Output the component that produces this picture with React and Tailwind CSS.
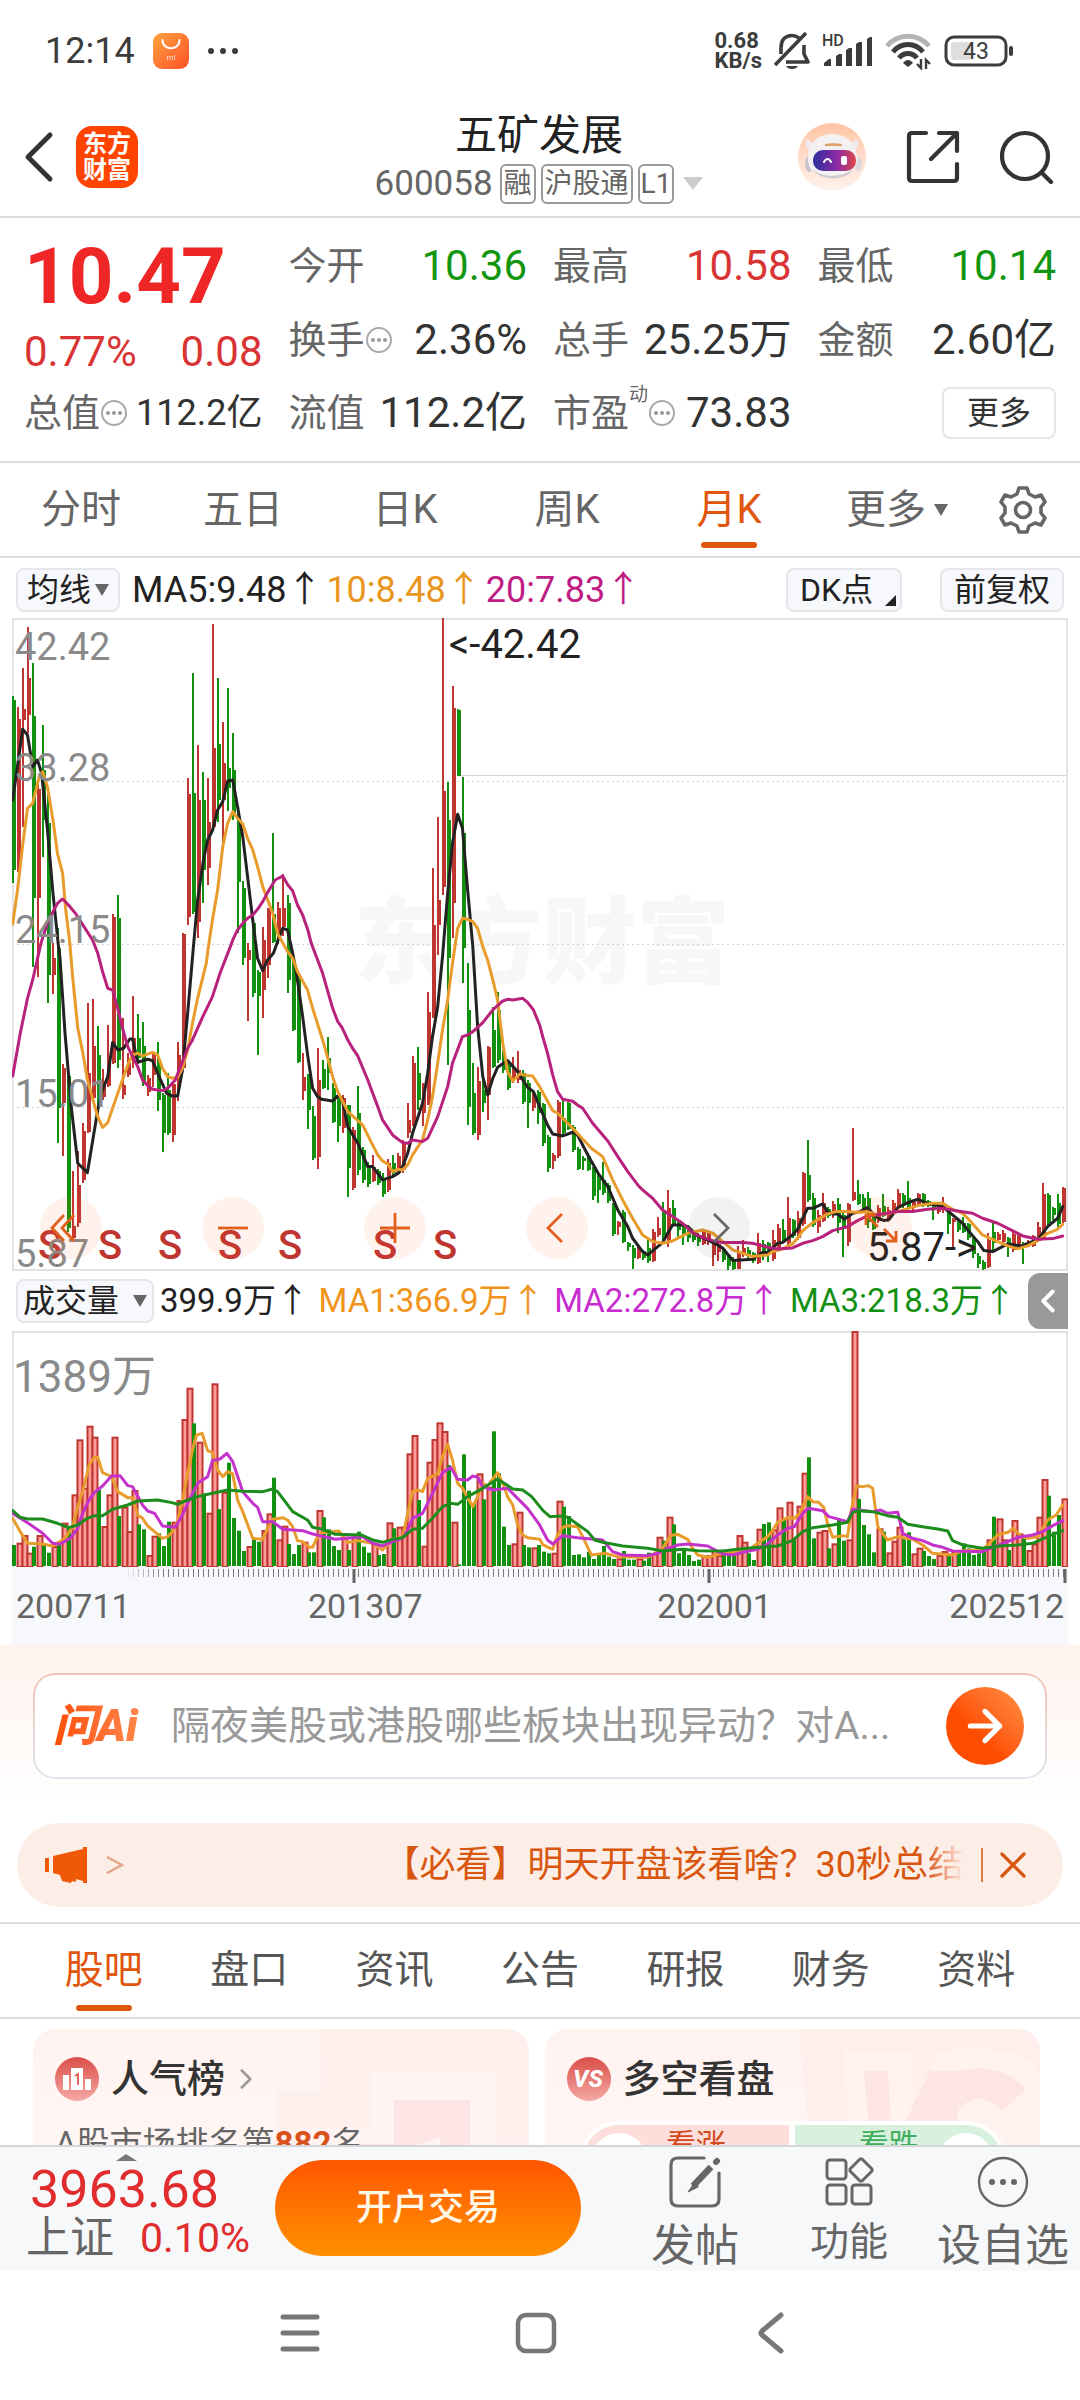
import React, { useState } from "react";
import { ChevronLeft, ChevronRight, X, ArrowRight } from "lucide-react";

const BAR_STEP = 5;

// [direction, high, low, body top, body bottom], one row per month
const CANDLES = [
  ["g", 78, 265, 82, 252], ["r", 89, 254, 101, 254], ["r", 50, 209, 91, 102], ["r", 9, 115, 60, 97], ["g", 45, 349, 98, 280],
  ["r", 165, 359, 171, 280], ["g", 107, 239, 152, 202], ["g", 177, 385, 205, 357], ["r", 325, 376, 340, 357], ["g", 310, 525, 330, 490],
  ["r", 446, 538, 450, 485], ["g", 450, 614, 458, 610], ["r", 553, 622, 608, 620], ["r", 533, 609, 567, 605], ["r", 505, 565, 513, 562],
  ["r", 385, 515, 455, 514], ["r", 381, 482, 428, 480], ["g", 408, 495, 437, 485], ["r", 451, 482, 468, 479], ["r", 407, 469, 442, 468],
  ["r", 296, 446, 299, 445], ["g", 277, 450, 300, 442], ["r", 400, 481, 467, 477], ["r", 435, 459, 445, 457], ["r", 378, 450, 420, 440],
  ["g", 396, 446, 420, 440], ["g", 404, 468, 428, 465], ["r", 457, 478, 460, 474], ["r", 434, 469, 437, 457], ["g", 424, 493, 445, 482],
  ["g", 475, 534, 477, 515], ["g", 455, 517, 472, 515], ["r", 465, 524, 466, 517], ["r", 424, 483, 437, 469], ["r", 315, 452, 316, 450],
  ["r", 160, 307, 176, 299], ["g", 55, 296, 175, 294], ["r", 127, 320, 182, 304], ["g", 154, 285, 182, 252], ["r", 160, 267, 204, 250],
  ["r", 6, 212, 130, 209], ["g", 60, 204, 126, 182], ["r", 104, 229, 145, 182], ["g", 70, 193, 150, 170], ["g", 115, 202, 152, 195],
  ["g", 195, 315, 205, 264], ["g", 263, 347, 270, 340], ["r", 325, 403, 332, 342], ["g", 300, 379, 305, 375], ["g", 352, 437, 354, 378],
  ["r", 309, 400, 322, 372], ["r", 290, 360, 291, 347], ["g", 215, 325, 296, 324], ["r", 284, 326, 290, 322], ["r", 256, 318, 290, 309],
  ["g", 277, 375, 285, 362], ["g", 344, 413, 346, 412], ["g", 355, 445, 360, 444], ["r", 435, 482, 459, 473], ["g", 456, 511, 457, 492],
  ["g", 488, 542, 498, 540], ["r", 430, 551, 462, 539], ["g", 442, 471, 451, 470], ["g", 419, 472, 440, 455], ["g", 465, 505, 470, 504],
  ["g", 477, 524, 480, 508], ["r", 477, 515, 480, 510], ["g", 487, 579, 487, 550], ["r", 509, 572, 512, 570], ["g", 468, 557, 495, 552],
  ["g", 529, 565, 532, 562], ["g", 544, 569, 547, 566], ["r", 537, 564, 549, 563], ["g", 551, 567, 553, 565], ["g", 555, 579, 560, 576],
  ["r", 541, 574, 545, 572], ["g", 537, 557, 545, 555], ["r", 535, 557, 538, 555], ["r", 522, 555, 524, 552], ["r", 485, 520, 502, 515],
  ["r", 438, 508, 445, 506], ["g", 429, 492, 455, 482], ["r", 465, 508, 475, 495], ["r", 374, 487, 394, 487], ["r", 250, 400, 307, 399],
  ["r", 199, 337, 282, 307], ["r", 0, 277, 173, 269], ["g", 164, 447, 202, 340], ["r", 68, 320, 90, 285], ["g", 91, 158, 92, 158],
  ["g", 159, 365, 215, 330], ["g", 345, 507, 392, 489], ["g", 445, 517, 475, 515], ["r", 449, 522, 463, 517], ["g", 462, 494, 472, 485],
  ["r", 428, 502, 429, 477], ["g", 389, 450, 412, 449], ["g", 374, 445, 392, 442], ["g", 432, 455, 437, 452], ["g", 442, 472, 447, 470],
  ["r", 439, 465, 450, 462], ["r", 433, 465, 452, 462], ["g", 452, 486, 455, 484], ["g", 462, 510, 465, 485], ["r", 475, 493, 480, 490],
  ["g", 472, 506, 474, 495], ["g", 485, 528, 486, 525], ["g", 517, 554, 519, 550], ["r", 535, 551, 537, 543], ["r", 482, 540, 484, 538],
  ["g", 482, 517, 500, 515], ["g", 484, 512, 485, 511], ["g", 507, 534, 509, 532], ["g", 529, 552, 531, 551], ["g", 538, 552, 540, 543],
  ["g", 535, 553, 538, 552], ["g", 549, 582, 551, 578], ["g", 557, 585, 560, 572], ["g", 544, 577, 562, 575], ["g", 565, 585, 567, 583],
  ["g", 585, 618, 587, 616], ["r", 603, 617, 604, 609], ["g", 592, 625, 594, 624], ["g", 624, 633, 625, 629], ["g", 627, 651, 630, 640],
  ["r", 629, 641, 631, 640], ["g", 632, 642, 633, 640], ["g", 620, 645, 630, 643], ["r", 611, 644, 614, 643], ["r", 599, 619, 610, 617],
  ["g", 584, 624, 592, 618], ["r", 572, 629, 590, 624], ["g", 582, 607, 590, 606], ["g", 602, 619, 604, 612], ["g", 605, 627, 608, 618],
  ["g", 607, 624, 609, 620], ["g", 612, 624, 614, 622], ["g", 615, 628, 617, 624], ["r", 611, 627, 613, 626], ["r", 612, 627, 614, 624],
  ["r", 622, 648, 624, 637], ["r", 624, 643, 626, 634], ["g", 629, 644, 631, 642], ["g", 635, 652, 637, 648], ["g", 639, 652, 641, 651],
  ["r", 628, 651, 634, 651], ["r", 622, 639, 630, 637], ["g", 629, 640, 632, 638], ["g", 634, 645, 635, 643], ["r", 615, 646, 625, 645],
  ["g", 622, 642, 626, 638], ["g", 624, 644, 625, 636], ["r", 612, 643, 622, 641], ["r", 606, 632, 610, 630], ["g", 601, 625, 612, 622],
  ["r", 579, 627, 600, 625], ["g", 601, 620, 602, 618], ["r", 593, 622, 600, 620], ["r", 554, 608, 555, 606], ["g", 522, 584, 557, 582],
  ["g", 575, 609, 580, 607], ["r", 592, 615, 597, 609], ["r", 575, 604, 585, 603], ["g", 589, 600, 591, 598], ["r", 583, 600, 586, 597],
  ["g", 580, 615, 586, 605], ["g", 595, 639, 597, 611], ["r", 585, 628, 586, 624], ["r", 510, 583, 574, 582], ["g", 562, 587, 576, 586],
  ["g", 576, 592, 580, 590], ["g", 574, 610, 580, 604], ["g", 595, 612, 598, 611], ["r", 587, 605, 590, 603], ["g", 576, 599, 588, 598],
  ["r", 589, 604, 592, 602], ["r", 582, 595, 585, 594], ["r", 571, 589, 575, 588], ["g", 575, 590, 577, 586], ["g", 563, 592, 580, 590],
  ["r", 582, 592, 584, 590], ["r", 575, 587, 576, 586], ["g", 575, 589, 576, 586], ["g", 582, 589, 583, 588], ["g", 584, 602, 586, 590],
  ["r", 587, 596, 589, 594], ["r", 579, 595, 585, 592], ["g", 590, 616, 592, 606], ["r", 600, 629, 601, 604], ["g", 602, 614, 603, 612],
  ["g", 599, 615, 605, 614], ["g", 605, 622, 606, 620], ["g", 620, 640, 622, 636], ["g", 635, 650, 638, 646], ["g", 642, 652, 644, 651],
  ["r", 615, 650, 622, 649], ["g", 604, 632, 614, 625], ["r", 614, 624, 616, 622], ["r", 612, 627, 615, 624], ["g", 619, 639, 620, 630],
  ["r", 612, 634, 616, 632], ["r", 615, 630, 618, 628], ["g", 624, 646, 625, 630], ["r", 622, 629, 623, 628], ["r", 617, 629, 618, 628],
  ["r", 604, 624, 609, 623], ["r", 565, 622, 576, 620], ["g", 575, 607, 577, 605], ["g", 589, 602, 590, 597], ["g", 576, 609, 585, 606],
  ["r", 569, 605, 570, 604],
];

// monthly volume, 705 is the height of the panel (1389万)
const VOLUMES = [
  63, 70, 93, 40, 58, 93, 63, 40, 60, 63, 130, 113, 215, 380, 235, 421, 388, 228, 120, 215,
  388, 150, 178, 105, 228, 125, 110, 33, 91, 98, 60, 133, 133, 198, 441, 535, 428, 373, 218, 160,
  548, 171, 223, 310, 144, 106, 45, 60, 80, 73, 108, 158, 265, 80, 121, 66, 36, 63, 73, 41,
  41, 168, 146, 110, 60, 48, 88, 48, 88, 103, 58, 40, 68, 33, 36, 131, 113, 118, 118, 338,
  393, 198, 61, 313, 381, 431, 405, 303, 133, 5, 335, 226, 188, 278, 200, 238, 404, 278, 118, 63,
  68, 163, 63, 56, 56, 63, 43, 38, 40, 196, 178, 150, 33, 35, 26, 43, 21, 33, 60, 28,
  21, 23, 45, 19, 19, 23, 16, 40, 38, 88, 76, 148, 125, 38, 50, 33, 15, 19, 30, 33,
  48, 33, 38, 38, 38, 93, 73, 38, 18, 112, 126, 131, 110, 176, 138, 193, 78, 181, 280, 326,
  83, 103, 108, 53, 68, 138, 76, 80, 705, 201, 123, 95, 41, 113, 103, 41, 76, 118, 80, 101,
  38, 55, 45, 30, 21, 33, 45, 35, 43, 48, 68, 53, 33, 38, 43, 80, 148, 143, 80, 48,
  138, 98, 83, 48, 68, 148, 261, 211, 103, 153, 203,
];

// moving averages, on a grid three times as fine as the candles
const PRICE_LINES = [
  {
    color: "#222222",
    points:
      "2,546 31,334 45,351 60,446 74,426 86,466 103,636 119,826 136,996 139,1016 154,1246 172,1466 191,1636 219,1664 249,1476 263,1416 278,1376 292,1274 307,1296 324,1291 342,1263 350,1263 365,1333 394,1324 408,1328 423,1366 449,1426 464,1434 481,1434 495,1356 510,1186 526,996 539,846 556,726 568,666 582,638 597,576 612,551 626,489 641,486 655,566 670,656 684,776 699,906 713,1021 728,1058 742,1026 759,1006 771,971 786,931 800,936 815,1006 826,1066 844,1196 859,1316 873,1411 887,1436 899,1444 931,1449 946,1434 958,1441 975,1526 1004,1576 1033,1646 1047,1646 1076,1686 1105,1676 1124,1664 1134,1646 1149,1606 1163,1546 1192,1456 1207,1366 1221,1256 1236,1166 1250,1016 1265,826 1279,676 1294,589 1308,631 1323,816 1338,986 1352,1226 1367,1376 1381,1431 1396,1381 1410,1348 1439,1328 1468,1361 1497,1408 1514,1421 1532,1466 1555,1521 1570,1548 1599,1554 1628,1543 1642,1551 1672,1611 1702,1666 1730,1706 1759,1776 1788,1826 1802,1861 1831,1901 1846,1911 1875,1886 1889,1874 1904,1846 1918,1821 1947,1821 1962,1826 1991,1854 2020,1866 2049,1881 2064,1891 2093,1928 2150,1924 2179,1904 2194,1904 2223,1876 2237,1874 2266,1851 2281,1834 2296,1801 2310,1771 2325,1771 2354,1758 2368,1781 2383,1788 2397,1788 2417,1804 2441,1786 2462,1781 2484,1769 2507,1796 2532,1808 2547,1804 2572,1769 2601,1754 2630,1744 2659,1756 2702,1766 2731,1791 2760,1816 2775,1836 2804,1871 2822,1898 2848,1901 2891,1878 2932,1884 2962,1871 2978,1866 3007,1826 3036,1801 3051,1766",
  },
  {
    color: "#e89c2c",
    points:
      "2,918 16,816 31,681 45,571 60,556 79,476 89,461 103,506 119,606 132,706 147,766 156,876 168,976 176,1076 191,1231 205,1301 219,1386 234,1441 249,1496 263,1528 278,1514 292,1471 314,1406 336,1341 350,1311 365,1306 379,1314 408,1303 423,1311 437,1351 452,1376 466,1381 481,1378 495,1351 510,1296 524,1216 539,1141 564,1036 569,996 582,906 597,816 612,686 626,616 641,581 655,601 670,618 684,661 699,696 713,746 728,806 757,886 771,946 800,1001 815,1021 829,1061 858,1116 873,1171 902,1266 917,1321 931,1376 946,1421 975,1481 1018,1521 1047,1581 1062,1611 1076,1629 1091,1638 1105,1661 1120,1654 1134,1656 1149,1641 1163,1611 1192,1566 1207,1506 1221,1436 1236,1336 1250,1236 1265,1146 1279,1036 1294,931 1308,901 1323,904 1338,911 1352,931 1367,986 1381,1026 1396,1086 1410,1146 1425,1276 1439,1361 1454,1389 1474,1368 1497,1373 1512,1374 1532,1406 1570,1478 1584,1486 1628,1531 1682,1591 1715,1616 1744,1686 1773,1746 1802,1801 1831,1851 1860,1871 1889,1876 1918,1869 1962,1846 2005,1836 2035,1846 2064,1871 2093,1896 2150,1916 2194,1911 2208,1901 2237,1893 2266,1878 2281,1861 2296,1838 2325,1814 2368,1788 2392,1781 2426,1781 2455,1784 2484,1781 2514,1791 2572,1781 2630,1763 2673,1756 2702,1756 2731,1774 2760,1786 2775,1801 2818,1851 2862,1871 2891,1884 2920,1893 2949,1884 2978,1868 3007,1846 3036,1834 3051,1819",
  },
  {
    color: "#b8217c",
    points:
      "2,1374 24,1246 45,1141 60,1086 84,976 103,916 119,881 132,856 147,843 164,861 184,886 209,926 234,966 249,1006 263,1061 278,1111 292,1116 307,1171 321,1231 336,1286 350,1316 365,1346 379,1386 394,1403 408,1414 437,1418 452,1411 474,1386 495,1331 510,1291 524,1266 554,1196 582,1136 604,1066 634,986 641,966 655,936 670,916 684,901 699,891 713,874 728,851 742,824 764,786 786,774 800,799 815,819 829,861 844,891 859,936 869,976 902,1066 931,1171 946,1211 958,1228 975,1266 989,1291 1004,1314 1033,1386 1062,1466 1076,1506 1105,1551 1134,1574 1149,1576 1163,1566 1192,1571 1207,1561 1236,1496 1265,1406 1279,1336 1308,1256 1323,1251 1338,1241 1367,1214 1396,1176 1425,1149 1439,1144 1454,1146 1483,1141 1497,1153 1514,1176 1532,1221 1541,1256 1555,1306 1570,1371 1584,1421 1599,1444 1628,1450 1642,1461 1657,1471 1686,1516 1730,1569 1759,1616 1788,1661 1817,1701 1831,1716 1860,1741 1889,1776 1918,1796 1947,1816 1976,1844 2005,1859 2035,1868 2064,1874 2122,1874 2150,1876 2194,1888 2223,1893 2266,1890 2296,1876 2325,1868 2354,1856 2383,1838 2426,1826 2455,1808 2484,1794 2528,1788 2572,1781 2615,1781 2659,1774 2702,1771 2746,1779 2789,1786 2818,1801 2862,1816 2906,1839 2935,1854 2978,1864 3022,1862 3051,1854",
  },
];

const VOLUME_LINES = [
  {
    color: "#e89c2c",
    points:
      "2,562 24,602 45,637 89,639 118,645 154,622 176,587 191,527 205,482 224,402 239,379 249,379 263,425 289,437 307,482 336,500 350,500 365,552 379,562 394,585 414,602 437,622 452,617 466,602 481,572 495,507 510,427 524,357 536,312 552,307 568,359 582,365 597,417 612,437 626,422 641,429 655,507 670,542 699,622 728,625 742,592 757,565 786,560 800,567 815,587 829,629 844,632 864,649 873,649 887,617 902,605 949,600 975,635 1004,629 1047,637 1076,657 1105,625 1134,617 1149,547 1163,482 1178,477 1192,482 1207,442 1236,429 1250,377 1265,340 1279,387 1294,457 1308,472 1338,527 1352,497 1367,457 1381,465 1410,425 1425,457 1439,497 1454,522 1468,582 1483,612 1497,620 1532,625 1542,642 1570,655 1584,612 1599,589 1613,584 1642,587 1657,617 1682,672 1722,667 1759,677 1846,679 1875,662 1889,652 1912,614 1933,610 1962,625 1976,652 1991,672 2020,679 2064,667 2092,665 2136,659 2165,637 2194,617 2208,599 2223,574 2252,560 2272,562 2287,547 2310,497 2325,512 2342,514 2357,529 2368,577 2383,619 2412,614 2426,617 2437,537 2452,465 2472,467 2487,464 2499,472 2514,587 2542,627 2572,617 2615,625 2644,642 2673,667 2731,672 2760,659 2818,657 2842,632 2862,612 2892,604 2906,592 2932,617 2949,622 2978,617 3007,567 3032,552 3051,522",
  },
  {
    color: "#c432cc",
    points:
      "2,547 45,575 89,607 118,637 139,639 169,622 191,592 205,547 224,507 239,485 263,465 289,435 314,434 336,464 350,467 379,522 394,540 414,547 437,585 474,589 495,552 510,517 539,457 568,437 582,389 604,384 624,367 641,392 670,482 699,517 713,529 728,572 757,572 786,595 844,599 873,609 939,625 1018,617 1047,637 1076,645 1105,632 1134,622 1149,597 1163,562 1192,547 1221,487 1250,425 1274,409 1294,445 1323,447 1338,435 1352,439 1367,467 1396,477 1439,472 1468,502 1497,532 1532,582 1555,627 1570,639 1599,614 1642,620 1715,627 1744,662 1773,672 1846,674 1875,667 1904,652 1933,642 1962,639 2020,645 2064,669 2093,672 2122,664 2165,655 2194,639 2223,612 2252,592 2272,587 2296,547 2312,532 2354,539 2372,557 2426,572 2441,535 2502,542 2522,537 2542,547 2572,544 2586,607 2615,622 2644,629 2673,642 2702,649 2731,660 2818,662 2848,649 2891,632 2920,619 2964,612 2992,602 3022,584 3051,569",
  },
  {
    color: "#1c8c1c",
    points:
      "2,539 24,559 45,564 89,564 132,577 164,590 191,582 219,562 239,554 263,554 292,535 336,522 365,510 423,507 464,515 481,520 510,507 539,497 582,487 626,477 670,481 728,482 757,474 771,482 786,502 815,542 858,567 873,589 902,595 939,610 1014,612 1047,627 1076,634 1105,625 1134,620 1163,595 1192,592 1221,562 1250,527 1274,517 1294,520 1323,497 1367,472 1410,444 1454,474 1483,477 1509,497 1542,539 1562,557 1592,555 1613,559 1642,580 1672,602 1692,627 1715,634 1773,645 1846,652 1889,660 1947,655 1991,659 2064,660 2107,655 2152,650 2223,645 2266,629 2296,602 2325,590 2383,582 2426,574 2441,545 2455,539 2499,542 2542,554 2572,559 2601,580 2644,587 2688,594 2717,600 2731,629 2760,642 2818,652 2877,644 2920,642 2964,637 3007,617 3051,599",
  },
];

const PERIODS = ["分时", "五日", "日K", "周K", "月K"];
const SECTIONS = ["股吧", "盘口", "资讯", "公告", "研报", "财务", "资料"];

const RED = "#bf3631";
const GREEN = "#12900f";

function Lines({ lines }) {
  return (
    <g transform="scale(0.3444 0.3333)" fill="none" strokeLinejoin="round" strokeLinecap="round">
      {lines.map((line) => (
        <polyline
          key={line.color}
          points={line.points}
          stroke={line.color}
          strokeWidth="3"
          vectorEffect="non-scaling-stroke"
        />
      ))}
    </g>
  );
}

function StatusBar() {
  return (
    <div className="flex h-[102px] shrink-0 items-center pl-[45px] pr-[66px] text-[#3c3c3c]">
      <span className="text-[36px] leading-none">12:14</span>
      <svg className="ml-[18px] size-9" viewBox="0 0 36 36">
        <defs>
          <linearGradient id="store" x1="0" y1="0" x2="1" y2="1">
            <stop offset="0" stopColor="#ffa23e" />
            <stop offset="1" stopColor="#ff5126" />
          </linearGradient>
        </defs>
        <rect width="36" height="36" rx="9" fill="url(#store)" />
        <path d="M9.500 7c0 11 17 11 17 0" fill="none" stroke="#fff" strokeWidth="2" strokeLinecap="round" />
        <text x="18" y="27" fontSize="8" fill="#fff" opacity="0.8" textAnchor="middle">mi</text>
      </svg>
      <svg className="ml-[18px] h-2 w-8" viewBox="0 0 32 8" fill="currentColor">
        <circle cx="4" cy="4" r="3" />
        <circle cx="16" cy="4" r="3" />
        <circle cx="28" cy="4" r="3" />
      </svg>
      <div className="ml-auto flex items-center">
        <span className="text-[22px] font-bold leading-[20px]">
          0.68
          <br />
          KB/s
        </span>
        <svg className="ml-3 h-[38px] w-9" viewBox="0 0 36 38" fill="none" stroke="currentColor" strokeWidth="3.600" strokeLinejoin="round">
          <path d="M7 22v-6C7 8 11 3.500 18 3.500c3 0 5 1 7 2.500M30 13v9l4 8H12" />
          <path d="M32 1 1 33" />
          <path d="M12 34h12c-2 4-10 4-12 0z" fill="currentColor" stroke="none" />
        </svg>
        <svg className="ml-3 h-[34px] w-[50px]" viewBox="0 0 50 34" fill="currentColor">
          <text x="0" y="12" fontSize="16" fontWeight="500">HD</text>
          <path d="M2 32v-3l5-4h2v7zM14 32V22l3-2h3v12zM24 32V16l3-2h3v18zM34 32V10l3-2h3v24zM45 32V5l3-2h2v29z" />
        </svg>
        <svg className="ml-3 h-[38px] w-12" viewBox="0 0 48 38" fill="none" strokeWidth="5">
          <path d="M3 14C14 1 34 1 45 14" stroke="#b4b4b4" />
          <path d="M9 20C17 10 31 10 39 20" stroke="currentColor" />
          <path d="M15 26c5-6 13-6 18 0" stroke="currentColor" />
          <path d="m24 35-5-4c3-4 7-4 10 0z" fill="currentColor" />
          <path d="M37 27v9l-4-4M42 37v-9l4 4" stroke="currentColor" strokeWidth="2.400" />
        </svg>
        <svg className="ml-3 h-8 w-[70px]" viewBox="0 0 70 32">
          <rect x="2" y="2" width="60" height="28" rx="8" fill="none" stroke="currentColor" strokeWidth="3" />
          <rect x="7" y="7" width="22" height="18" rx="4" fill="#dedede" />
          <rect x="65" y="11" width="4" height="10" rx="2" fill="currentColor" />
          <text x="32" y="24" fontSize="23" textAnchor="middle" fill="currentColor">43</text>
        </svg>
      </div>
    </div>
  );
}

function Robot() {
  return (
    <svg className="size-[68px]" viewBox="0 0 68 68">
      <defs>
        <linearGradient id="halo" x1="0" y1="0" x2="0" y2="1">
          <stop offset="0" stopColor="#ffc4a4" />
          <stop offset="1" stopColor="#fff3ee" />
        </linearGradient>
        <linearGradient id="visor" x1="0" y1="0" x2="1" y2="0">
          <stop offset="0" stopColor="#2c2f9c" />
          <stop offset="0.550" stopColor="#8a2aa6" />
          <stop offset="1" stopColor="#e0484c" />
        </linearGradient>
      </defs>
      <circle cx="34" cy="34" r="34" fill="url(#halo)" />
      <path d="M10 15c-5 5-2 11 4 13l6-7c-5 0-8-2-10-6zM58 15c5 5 2 11-4 13l-6-7c5 0 8-2 10-6z" fill="#f1ebec" />
      <ellipse cx="11" cy="41" rx="4" ry="8" fill="#c9c4cc" />
      <ellipse cx="60" cy="41" rx="4" ry="7" fill="#ddd8de" />
      <path d="M34 11c14 0 24 9 25 22 1 14-9 22-25 22S9 47 10 33c1-13 10-22 24-22z" fill="#f4f1f3" />
      <path d="M15 46c8 9 30 9 40 0-5 12-34 13-40 0z" fill="#cfcad1" />
      <rect x="15" y="27" width="43" height="21" rx="10" fill="url(#visor)" />
      <path d="M26 39c2-4 5-4 7 0" fill="none" stroke="#fff" strokeWidth="2" strokeLinecap="round" />
      <rect x="43" y="33" width="6" height="9" rx="2" fill="#fff" />
      <path d="M27 21c5-1 12-1 17 0v2H27z" fill="#e3a26c" />
    </svg>
  );
}

function Header() {
  return (
    <header className="grid h-[116px] shrink-0 grid-cols-3 items-center border-b-2 border-[#dcdcdc] pb-1 pl-6 pr-[26px]">
      <div className="flex items-center gap-[22px]">
        <button type="button" aria-label="返回">
          <svg className="h-[52px] w-[30px]" viewBox="0 0 30 52" fill="none" stroke="#333" strokeWidth="5" strokeLinecap="round" strokeLinejoin="round">
            <path d="M26 4 4 26l22 22" />
          </svg>
        </button>
        <div className="flex size-[62px] items-center justify-center rounded-2xl bg-[#ff4400] text-center text-[24px] font-bold leading-[26px] text-white">
          东方
          <br />
          财富
        </div>
      </div>
      <div className="flex flex-col items-center gap-[3px]">
        <h1 className="text-[42px] leading-[50px] text-[#222]">五矿发展</h1>
        <div className="flex items-center gap-[5px] text-[28px] leading-[36px] text-[#666]">
          <span className="text-[35px]">600058</span>
          <span className="ml-[2px] rounded-md border-2 border-[#999] px-[2px]">融</span>
          <span className="whitespace-nowrap rounded-md border-2 border-[#999] px-[2px]">沪股通</span>
          <span className="rounded-md border-2 border-[#999] px-px">L1</span>
          <svg className="ml-1 h-[13px] w-5" viewBox="0 0 20 13" fill="#ccc">
            <path d="M0 0h20L10 13z" />
          </svg>
        </div>
      </div>
      <div className="flex items-center justify-end gap-10">
        <button type="button" aria-label="助手">
          <Robot />
        </button>
        <button type="button" aria-label="分享">
          <svg className="size-[54px]" viewBox="0 0 54 54" fill="none" stroke="#333" strokeWidth="4.200" strokeLinecap="round" strokeLinejoin="round">
            <path d="M20 3H6Q3 3 3 6v42q0 3 3 3h42q3 0 3-3V34" />
            <path d="M33 3h18v18M51 3 25 29" />
          </svg>
        </button>
        <button type="button" aria-label="搜索">
          <svg className="size-[54px]" viewBox="0 0 54 54" fill="none" stroke="#333" strokeWidth="4.200" strokeLinecap="round">
            <circle cx="25" cy="26" r="23" />
            <path d="m42 43 9 9" />
          </svg>
        </button>
      </div>
    </header>
  );
}

function Dots() {
  return (
    <svg className="size-7 shrink-0" viewBox="0 0 28 28" fill="#999">
      <circle cx="14" cy="14" r="12" fill="none" stroke="#aaa" strokeWidth="2" />
      <circle cx="8" cy="14" r="2" />
      <circle cx="14" cy="14" r="2" />
      <circle cx="20" cy="14" r="2" />
    </svg>
  );
}

function Stat({ label, value, tone = "text-[#333]", size = "text-[42px]", info, sup }) {
  return (
    <div className="flex items-center whitespace-nowrap">
      <span className="text-[38px] text-[#666]">{label}</span>
      {sup && <span className="self-start text-[19px] leading-none text-[#666]">{sup}</span>}
      {info && <Dots />}
      <span className={`ml-auto ${size} ${tone}`}>{value}</span>
    </div>
  );
}

function Quote() {
  return (
    <section className="grid h-[245px] shrink-0 grid-cols-4 gap-x-[26px] border-b-2 border-[#dcdcdc] px-6 pb-5 pt-3 leading-[56px]">
      <div className="flex flex-col justify-between">
        <div className="text-[#ef2626]">
          <div className="text-[78px] font-bold leading-[94px]">10.47</div>
          <div className="flex justify-between text-[42px] leading-[56px] text-[#d93434]">
            <span>0.77%</span>
            <span>0.08</span>
          </div>
        </div>
        <Stat label="总值" info value="112.2亿" size="text-[36px]" />
      </div>
      <div className="flex flex-col justify-between pt-2">
        <Stat label="今开" value="10.36" tone="text-[#12960f]" />
        <Stat label="换手" info value="2.36%" />
        <Stat label="流值" value="112.2亿" />
      </div>
      <div className="flex flex-col justify-between pt-2">
        <Stat label="最高" value="10.58" tone="text-[#d93434]" />
        <Stat label="总手" value="25.25万" />
        <Stat label="市盈" sup="动" info value="73.83" />
      </div>
      <div className="flex flex-col justify-between pt-2">
        <Stat label="最低" value="10.14" tone="text-[#12960f]" />
        <Stat label="金额" value="2.60亿" />
        <div className="flex h-14 items-center justify-end">
          <button type="button" className="h-[52px] w-[114px] rounded-lg border-2 border-[#e6e6e6] text-[32px] leading-none text-[#333]">
            更多
          </button>
        </div>
      </div>
    </section>
  );
}

function PeriodTabs() {
  const [period, setPeriod] = useState("月K");

  return (
    <nav className="flex h-[95px] shrink-0 items-stretch border-b-2 border-[#dcdcdc] text-[40px] text-[#666]">
      {PERIODS.map((name) => (
        <button
          key={name}
          type="button"
          onClick={() => setPeriod(name)}
          className={`relative w-[15%] ${name === period ? "text-[#e0560c]" : ""}`}
        >
          {name}
          {name === period && (
            <span className="absolute bottom-2 left-1/2 h-[6px] w-14 -translate-x-1/2 rounded-full bg-[#e0560c]" />
          )}
        </button>
      ))}
      <button type="button" className="flex flex-1 items-center justify-end gap-2 pr-5">
        更多
        <svg className="h-3 w-[14px]" viewBox="0 0 14 12" fill="#666">
          <path d="M0 0h14L7 12z" />
        </svg>
      </button>
      <button type="button" aria-label="设置" className="w-[112px] pl-[30px]">
        <svg className="size-[50px]" viewBox="0 0 50 50" fill="none" stroke="#666" strokeWidth="3.600" strokeLinejoin="round">
          <path d="M21 3h8l2 6 6 3 6-2 4 7-4 5v6l4 5-4 7-6-2-6 3-2 6h-8l-2-6-6-3-6 2-4-7 4-5v-6l-4-5 4-7 6 2 6-3z" />
          <circle cx="25" cy="25" r="7.500" />
        </svg>
      </button>
    </nav>
  );
}

const chip =
  "flex h-11 items-center rounded-lg border-2 border-[#e4e6ea] bg-[#f7f8fb] text-[32px] leading-none text-[#222] whitespace-nowrap";

function PriceToolbar() {
  return (
    <div className="flex h-[60px] shrink-0 items-center whitespace-nowrap px-4 pt-1 text-[36px]">
      <button type="button" className={`${chip} gap-1 px-[9px]`}>
        均线
        <svg className="h-3 w-[14px]" viewBox="0 0 14 12" fill="#666">
          <path d="M0 0h14L7 12z" />
        </svg>
      </button>
      <span className="ml-3 text-[#222]">MA5:9.48↑</span>
      <span className="ml-1 text-[#e8961e]">10:8.48↑</span>
      <span className="ml-1 text-[#c01c84]">20:7.83↑</span>
      <button type="button" className={`${chip} ml-auto gap-3 pl-3 pr-1`}>
        DK点
        <svg className="mb-1 h-[11px] w-[11px] self-end" viewBox="0 0 11 11" fill="#222">
          <path d="M11 0v11H0z" />
        </svg>
      </button>
      <button type="button" className={`${chip} ml-[38px] px-3`}>前复权</button>
    </div>
  );
}

function PriceChart() {
  return (
    <div className="relative mx-3 shrink-0">
      <svg className="block h-auto w-full" viewBox="0 0 1056 653">
        <text x="342" y="358" fontSize="94" fontWeight="900" fill="#f7f7f7">东方财富</text>
        <g stroke="#d4d4d4" strokeWidth="1" strokeDasharray="2 3">
          <path d="M0 163.500h1056M0 326.500h1056M0 489.500h1056" />
        </g>
        <path d="M448 157.500h607" stroke="#d4d4d4" strokeWidth="1" />
        <rect x="1" y="1" width="1054" height="651" fill="none" stroke="#e2e2e2" strokeWidth="2" />
        {CANDLES.map(([dir, high, low, top, bottom], i) => (
          <g key={i} fill={dir === "r" ? RED : GREEN}>
            <rect x={i * BAR_STEP} y={high} width="2" height={low - high} />
            <rect x={i * BAR_STEP} y={top} width="4" height={Math.max(bottom - top, 2)} />
          </g>
        ))}
        <Lines lines={PRICE_LINES} />
        <g fontSize="40" fontWeight="500" fill={RED} textAnchor="middle">
          {[38, 98, 158, 218, 278, 373, 433].map((x) => (
            <text key={x} x={x} y="641">S</text>
          ))}
        </g>
        <g fontSize="38" fill="#8a8a8a">
          <text x="3" y="42">42.42</text>
          <text x="3" y="163">33.28</text>
          <text x="3" y="325">24.15</text>
          <text x="3" y="489">15.01</text>
          <text x="3" y="649">5.87</text>
        </g>
        <g fontSize="40" fill="#222">
          <text x="437" y="40">&lt;-42.42</text>
          <text x="855" y="643">5.87-&gt;</text>
        </g>
      </svg>
      <div className="absolute bottom-3 left-7 flex gap-[100px]">
        {[
          ["最早", "M24 18 12 31l12 13M34 18 22 31l12 13"],
          ["缩小", "M16 31h30"],
          ["放大", "M16 31h30M31 16v30"],
          ["向左", "M36 17 22 31l14 14"],
          ["向右", "M26 17l14 14-14 14"],
          ["全屏", "M16 28V18h10M17 19l11 11M46 34v10H36M45 43 34 32"],
        ].map(([label, d]) => (
          <button
            key={label}
            type="button"
            aria-label={label}
            className={`size-[62px] rounded-full ${label === "向右" ? "bg-black/5" : "bg-[#ff5a1e]/8"}`}
          >
            <svg viewBox="0 0 62 62" fill="none" stroke={label === "向右" ? "#666" : "#e0601c"} strokeWidth="2.800">
              <path d={d} />
            </svg>
          </button>
        ))}
      </div>
    </div>
  );
}

function VolumeToolbar() {
  return (
    <div className="flex h-[60px] shrink-0 items-center whitespace-nowrap pl-4 pr-3 text-[33px]">
      <button type="button" className={`${chip} gap-[14px] px-[5px]`}>
        成交量
        <svg className="h-3 w-[14px]" viewBox="0 0 14 12" fill="#666">
          <path d="M0 0h14L7 12z" />
        </svg>
      </button>
      <div className="flex flex-1 justify-between pl-[6px] pr-3">
        <span className="text-[#222]">399.9万↑</span>
        <span className="text-[#f0941c]">MA1:366.9万↑</span>
        <span className="text-[#c82cd0]">MA2:272.8万↑</span>
        <span className="text-[#129012]">MA3:218.3万↑</span>
      </div>
      <button type="button" aria-label="展开" className="flex h-14 w-10 items-center justify-center rounded-l-xl bg-[#999] text-white">
        <ChevronLeft size={38} strokeWidth={2.5} />
      </button>
    </div>
  );
}

function VolumeChart() {
  return (
    <div className="mx-3 shrink-0 bg-[#f7f8fb]">
      <svg className="block h-auto w-full bg-white" viewBox="0 0 1056 236">
        <rect x="1" y="1" width="1054" height="240" fill="none" stroke="#e2e2e2" strokeWidth="2" />
        {VOLUMES.map((volume, i) => {
          const height = volume / 3;
          const x = i * BAR_STEP;
          return CANDLES[i][0] === "r" ? (
            <rect key={i} x={x + 0.5} y={236 - height} width="5" height={height} fill="#ff9d9a" stroke={RED} strokeWidth="2" />
          ) : (
            <rect key={i} x={x} y={235 - height} width="4" height={height} fill={GREEN} />
          );
        })}
        <Lines lines={VOLUME_LINES} />
        <text x="1" y="61" fontSize="44" fill="#8a8a8a">1389万</text>
      </svg>
      <svg className="block h-auto w-full" viewBox="0 0 1056 16">
        {VOLUMES.map((_, i) => (
          <rect
            key={i}
            x={i * BAR_STEP + 1}
            y="2"
            width="1"
            height="8"
            fill="#777"
            opacity={Math.min(Math.max((i - 22) / 8, 0), 1)}
          />
        ))}
        <path d="M342 2v14M697 2v14M1053 2v14" stroke="#666" strokeWidth="3" />
      </svg>
      <div className="grid h-[62px] grid-cols-[1fr_2fr_2fr_1fr] items-start px-1 text-[34px] leading-[46px] text-[#666]">
        <span>200711</span>
        <span className="justify-self-center">201307</span>
        <span className="justify-self-center">202001</span>
        <span className="justify-self-end">202512</span>
      </div>
    </div>
  );
}

function AskAi() {
  return (
    <div className="shrink-0 bg-linear-to-b from-[#fff2ed] to-white px-[33px] pb-[22px] pt-7">
      <div className="rounded-[22px] bg-linear-to-b from-[#f3c4b8] to-[#dfe5ef] p-[2px]">
        <form className="flex h-[102px] items-center rounded-[20px] bg-white pl-[18px] pr-[21px]" onSubmit={(ev) => ev.preventDefault()}>
          <label htmlFor="ask" className="w-[96px] whitespace-nowrap bg-linear-to-r from-[#ff4d00] to-[#ff8a4c] bg-clip-text text-[44px] font-black italic leading-[56px] text-transparent">
            问Ai
          </label>
          <input
            id="ask"
            type="text"
            placeholder="隔夜美股或港股哪些板块出现异动？对A..."
            className="ml-[22px] min-w-0 flex-1 text-[39px] outline-none placeholder:text-[#999]"
          />
          <button type="submit" aria-label="提问" className="ml-6 flex size-[78px] items-center justify-center rounded-full bg-linear-to-tr from-[#ff4d00] from-40% to-[#ff9040] text-white">
            <ArrowRight size={50} strokeWidth={2.5} />
          </button>
        </form>
      </div>
    </div>
  );
}

function Notice() {
  const [open, setOpen] = useState(true);
  if (!open) return null;

  return (
    <div className="mx-[17px] mb-[15px] mt-[22px] flex h-[84px] shrink-0 items-center rounded-full bg-[#fceee6] pl-7 pr-7 text-[#d9560f]">
      <svg className="h-9 w-[42px]" viewBox="0 0 42 36" fill="#ee5806">
        <path d="M0 11h4v14H0zM8 9 38 2V0h4v36h-4v-2l-7-2v3l-4-1-1 2-9-2-2-6-7-2z" />
      </svg>
      <svg className="ml-[19px] h-[18px] w-[18px]" viewBox="0 0 18 18" fill="none" stroke="#e3a486" strokeWidth="2.400">
        <path d="m1 1 15 8-15 8" />
      </svg>
      <a href="#notice" className="ml-auto mr-[17px] flex whitespace-nowrap text-[36px]">
        【必看】明天开盘该看啥？30秒总
        <span className="bg-linear-to-r from-[#d9560f] to-[#fceee6] bg-clip-text text-transparent">结</span>
      </a>
      <span className="h-[34px] w-[2px] bg-[#dd7a48]" />
      <button type="button" aria-label="关闭" onClick={() => setOpen(false)} className="ml-2">
        <X size={44} strokeWidth={1.8} />
      </button>
    </div>
  );
}

function SectionTabs() {
  const [section, setSection] = useState("股吧");

  return (
    <nav className="flex h-[97px] shrink-0 border-y-2 border-[#dcdcdc] px-[31px] text-[39px] text-[#555]">
      {SECTIONS.map((name) => (
        <button
          key={name}
          type="button"
          onClick={() => setSection(name)}
          className={`relative flex-1 ${name === section ? "text-[#e0560c]" : ""}`}
        >
          {name}
          {name === section && (
            <span className="absolute bottom-[6px] left-1/2 h-[6px] w-14 -translate-x-1/2 rounded-full bg-[#e0560c]" />
          )}
        </button>
      ))}
    </nav>
  );
}

function Cards() {
  return (
    <div className="grid min-h-0 flex-1 grid-cols-2 gap-4 overflow-hidden pl-[33px] pr-10 pt-[10px]">
      <article className="relative h-[240px] overflow-hidden rounded-[22px] bg-linear-to-b from-[#fff3f0] to-[#fff9f7] pl-[22px] pt-6">
        <svg className="absolute right-0 top-0 h-60 w-[254px]" viewBox="0 0 254 240">
          <path d="M46 0h208v240H0V62h46z" fill="#fdecea" opacity="0.6" />
          <path d="M97 43h123v197H30v-140h67z" fill="#fff4f1" />
          <path d="M119 71h76v169H68V115h51z" fill="#fce5e4" />
          <text x="126" y="180" fontSize="100" fontWeight="700" fill="#fff4f1">1</text>
        </svg>
        <h2 className="relative flex items-center text-[38px] font-medium leading-[52px] text-[#333]">
          <svg className="mr-3 size-11" viewBox="0 0 44 44">
            <defs>
              <linearGradient id="badge" x1="0" y1="0" x2="0" y2="1">
                <stop offset="0" stopColor="#da4d48" />
                <stop offset="1" stopColor="#f5a9a4" />
              </linearGradient>
            </defs>
            <circle cx="22" cy="22" r="22" fill="url(#badge)" />
            <path d="M8 18h6v15H8zM16 11h12v22H16zM30 22h6v11h-6z" fill="#fff" />
            <path d="m20 19 3-2v11" fill="none" stroke="#dd6661" strokeWidth="2" />
          </svg>
          人气榜
          <ChevronRight size={34} strokeWidth={1.8} className="ml-1 text-[#999]" />
        </h2>
        <p className="relative mt-4 whitespace-nowrap text-[33px] leading-[46px] text-[#666]">
          A股市场排名第<span className="font-bold text-[#d9521c]">882</span>名
        </p>
      </article>
      <article className="relative h-[240px] overflow-hidden rounded-[22px] bg-linear-to-b from-[#fff3f0] to-[#fffaf8] pl-[22px] pt-6">
        <svg className="absolute right-0 top-0 h-60 w-[242px]" viewBox="0 0 242 240">
          <path d="M0 0h242v240H26z" fill="#fdebe9" opacity="0.6" />
          <path d="M46 22h66l6 70 22-70q80-10 102 20v198H60z" fill="#fff2ef" />
          <path d="M66 42h24l4 78 38-78h30q40-10 66 18l-24 22q-20-22-42-4-10 22 24 34 30 14 34 50H76z" fill="#fce5e4" />
        </svg>
        <h2 className="relative flex items-center text-[38px] font-medium leading-[52px] text-[#333]">
          <svg className="mr-3 size-11" viewBox="0 0 44 44">
            <circle cx="22" cy="22" r="22" fill="url(#badge)" />
            <text x="21" y="30" fontSize="24" fontWeight="800" fontStyle="italic" fill="#fff" textAnchor="middle">VS</text>
          </svg>
          多空看盘
        </h2>
        <div className="relative ml-3 mr-[34px] mt-4 flex h-20 overflow-hidden rounded-full border-4 border-white text-[30px] leading-10">
          <button type="button" className="flex flex-1 justify-center bg-[#fddeda] pl-5 text-[#d4481c]">看涨</button>
          <span className="w-[6px] bg-white" />
          <button type="button" className="flex flex-1 justify-center bg-[#d8f0de] pr-5 text-[#3fae5c]">看跌</button>
          <span className="absolute left-2 top-2 size-14 rounded-full bg-white" />
          <span className="absolute right-2 top-2 size-14 rounded-full bg-white" />
        </div>
      </article>
    </div>
  );
}

function BottomBar() {
  return (
    <footer className="flex h-[126px] shrink-0 border-t-2 border-[#d4d6d9] bg-[#f7f8fa] text-[#666]">
      <button type="button" className="flex w-[275px] flex-col pl-[26px] pt-[7px] text-left">
        <svg className="ml-[90px] h-[7px] w-[21px]" viewBox="0 0 21 7" fill="#777">
          <path d="M0 7h21L10 0z" />
        </svg>
        <span className="pl-1 text-[52px] leading-[58px] text-[#e02c2c]">3963.68</span>
        <span className="flex items-center gap-[26px] text-[44px] leading-[38px]">
          上证
          <span className="text-[41px] text-[#e02c2c]">0.10%</span>
        </span>
      </button>
      <button type="button" className="mt-[13px] h-24 w-[306px] rounded-full bg-linear-to-b from-[#ff5500] to-[#ff9000] text-[36px] font-medium text-[#fff8e8]">
        开户交易
      </button>
      <div className="ml-[37px] grid flex-1 grid-cols-3 pt-[9px]">
        <button type="button" className="flex flex-col items-center">
          <svg className="size-[52px]" viewBox="0 0 52 52" fill="none" stroke="currentColor" strokeWidth="3.200" strokeLinecap="round">
            <path d="M35 2H9Q2 2 2 9v34q0 7 7 7h34q7 0 7-7V17" />
            <path d="M42 11 24 30" strokeWidth="6.500" strokeLinecap="butt" />
            <path d="m26 26-7 10 10-5z" fill="currentColor" strokeWidth="1" />
            <path d="m47 6 1-1" strokeWidth="6" />
          </svg>
          <span className="mt-2 whitespace-nowrap text-[44px] leading-[60px]">发帖</span>
        </button>
        <button type="button" className="flex flex-col items-center">
          <svg className="size-[52px]" viewBox="0 0 52 52" fill="none" stroke="currentColor" strokeWidth="3">
            <rect x="4" y="4" width="19" height="19" rx="3" />
            <rect x="4" y="29" width="19" height="19" rx="3" />
            <rect x="29" y="29" width="19" height="19" rx="3" />
            <path d="m37 3 2 0 10 10v2L39 25h-2L27 15v-2z" strokeLinejoin="round" />
          </svg>
          <span className="mt-1 whitespace-nowrap text-[39px] leading-[60px]">功能</span>
        </button>
        <button type="button" className="flex flex-col items-center">
          <svg className="size-[52px]" viewBox="0 0 52 52" fill="currentColor">
            <circle cx="26" cy="26" r="24" fill="none" stroke="currentColor" strokeWidth="2.400" />
            <circle cx="15" cy="26" r="3" />
            <circle cx="26" cy="26" r="3" />
            <circle cx="37" cy="26" r="3" />
          </svg>
          <span className="mt-2 whitespace-nowrap text-[44px] leading-[60px]">设自选</span>
        </button>
      </div>
    </footer>
  );
}

function SystemNav() {
  return (
    <div className="flex h-[129px] shrink-0 items-center justify-center gap-[194px] pb-[6px] pr-2 text-[#777]">
      <button type="button" aria-label="最近任务">
        <svg className="size-[42px]" viewBox="0 0 42 42" stroke="currentColor" strokeWidth="5" strokeLinecap="round">
          <path d="M4 5h34M4 21h34M4 37h34" />
        </svg>
      </button>
      <button type="button" aria-label="主屏幕">
        <svg className="size-[42px]" viewBox="0 0 42 42" fill="none" stroke="currentColor" strokeWidth="4.500">
          <rect x="3" y="3" width="36" height="36" rx="8" />
        </svg>
      </button>
      <button type="button" aria-label="系统返回">
        <svg className="size-[42px]" viewBox="0 0 42 42" fill="none" stroke="currentColor" strokeWidth="5" strokeLinecap="round" strokeLinejoin="round">
          <path d="M30 3 11 19q-2 2 0 4l19 16" />
        </svg>
      </button>
    </div>
  );
}

export default function App() {
  return (
    <div className="flex h-screen flex-col overflow-hidden bg-white font-['Roboto','Noto_Sans_CJK_SC',sans-serif]">
      <StatusBar />
      <Header />
      <main className="flex min-h-0 flex-1 flex-col overflow-hidden">
        <Quote />
        <PeriodTabs />
        <PriceToolbar />
        <PriceChart />
        <VolumeToolbar />
        <VolumeChart />
        <AskAi />
        <Notice />
        <SectionTabs />
        <Cards />
      </main>
      <BottomBar />
      <SystemNav />
    </div>
  );
}
